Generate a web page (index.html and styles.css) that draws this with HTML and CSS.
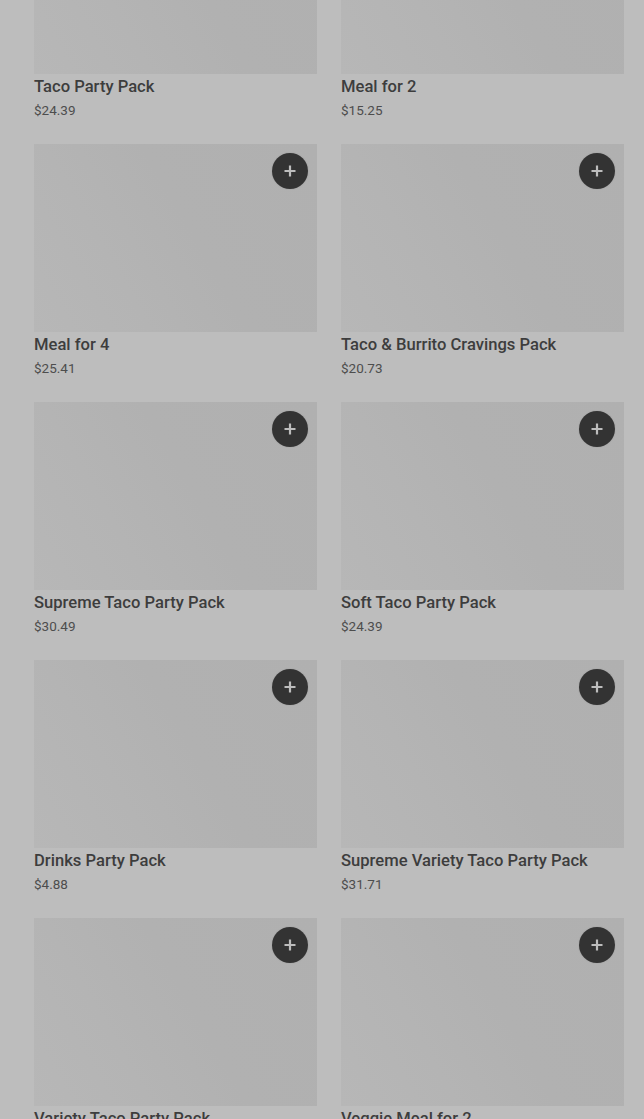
FILE: index.html
```html
<!DOCTYPE html>
<html lang="en">
<head>
<meta charset="utf-8">
<title>Packs</title>
<link rel="stylesheet" href="styles.css">
</head>
<body>
<main class="page">
  <div class="grid">
    <article class="card"><div class="thumb"><button class="add" aria-label="Add"><svg viewBox="0 0 14 14"><path d="M7 1.5v11M1.5 7h11"/></svg></button></div><h3 class="name">Taco Party Pack</h3><p class="price">$24.39</p></article>
    <article class="card"><div class="thumb"><button class="add" aria-label="Add"><svg viewBox="0 0 14 14"><path d="M7 1.5v11M1.5 7h11"/></svg></button></div><h3 class="name">Meal for 2</h3><p class="price">$15.25</p></article>
    <article class="card"><div class="thumb"><button class="add" aria-label="Add"><svg viewBox="0 0 14 14"><path d="M7 1.5v11M1.5 7h11"/></svg></button></div><h3 class="name">Meal for 4</h3><p class="price">$25.41</p></article>
    <article class="card"><div class="thumb"><button class="add" aria-label="Add"><svg viewBox="0 0 14 14"><path d="M7 1.5v11M1.5 7h11"/></svg></button></div><h3 class="name">Taco &amp; Burrito Cravings Pack</h3><p class="price">$20.73</p></article>
    <article class="card"><div class="thumb"><button class="add" aria-label="Add"><svg viewBox="0 0 14 14"><path d="M7 1.5v11M1.5 7h11"/></svg></button></div><h3 class="name">Supreme Taco Party Pack</h3><p class="price">$30.49</p></article>
    <article class="card"><div class="thumb"><button class="add" aria-label="Add"><svg viewBox="0 0 14 14"><path d="M7 1.5v11M1.5 7h11"/></svg></button></div><h3 class="name">Soft Taco Party Pack</h3><p class="price">$24.39</p></article>
    <article class="card"><div class="thumb"><button class="add" aria-label="Add"><svg viewBox="0 0 14 14"><path d="M7 1.5v11M1.5 7h11"/></svg></button></div><h3 class="name">Drinks Party Pack</h3><p class="price">$4.88</p></article>
    <article class="card"><div class="thumb"><button class="add" aria-label="Add"><svg viewBox="0 0 14 14"><path d="M7 1.5v11M1.5 7h11"/></svg></button></div><h3 class="name">Supreme Variety Taco Party Pack</h3><p class="price">$31.71</p></article>
    <article class="card"><div class="thumb"><button class="add" aria-label="Add"><svg viewBox="0 0 14 14"><path d="M7 1.5v11M1.5 7h11"/></svg></button></div><h3 class="name">Variety Taco Party Pack</h3><p class="price">$27.10</p></article>
    <article class="card"><div class="thumb"><button class="add" aria-label="Add"><svg viewBox="0 0 14 14"><path d="M7 1.5v11M1.5 7h11"/></svg></button></div><h3 class="name">Veggie Meal for 2</h3><p class="price">$15.25</p></article>
  </div>
</main>
</body>
</html>
```

FILE: styles.css
```css
html, body {
  margin: 0;
  padding: 0;
  background: #bdbdbd;
  height: 1119px;
  overflow: hidden;
}
body {
  font-family: "Roboto", "Liberation Sans", sans-serif;
  color: #333;
}
.page {
  padding: 0 20px 0 34px;
}
.grid {
  margin-top: -114px;
  display: grid;
  grid-template-columns: 1fr 1fr;
  column-gap: 24px;
  row-gap: 24px;
}
.card {
  display: flex;
  flex-direction: column;
}
.thumb {
  position: relative;
  height: 188px;
  background: linear-gradient(60deg, #b7b7b7 0%, #b4b4b4 30%, #b1b1b1 55%, #b0b0b0 100%);
}
.add {
  position: absolute;
  top: 9px;
  right: 9px;
  width: 36px;
  height: 36px;
  border: 0;
  padding: 0;
  border-radius: 50%;
  background: #333333;
  display: flex;
  align-items: center;
  justify-content: center;
  box-shadow: 0 0 0 1px rgba(160,160,160,0.3);
}
.add svg {
  width: 14px;
  height: 14px;
  fill: none;
  stroke: #bdbdbd;
  stroke-width: 2.2;
}
.name {
  margin: 0;
  font-size: 16.6px;
  font-weight: 500;
  line-height: 26px;
  color: #3d3d3d;
  letter-spacing: 0;
}
.price {
  margin: 0;
  font-size: 13.5px;
  line-height: 20px;
  color: #4d4d4d;
}
```
